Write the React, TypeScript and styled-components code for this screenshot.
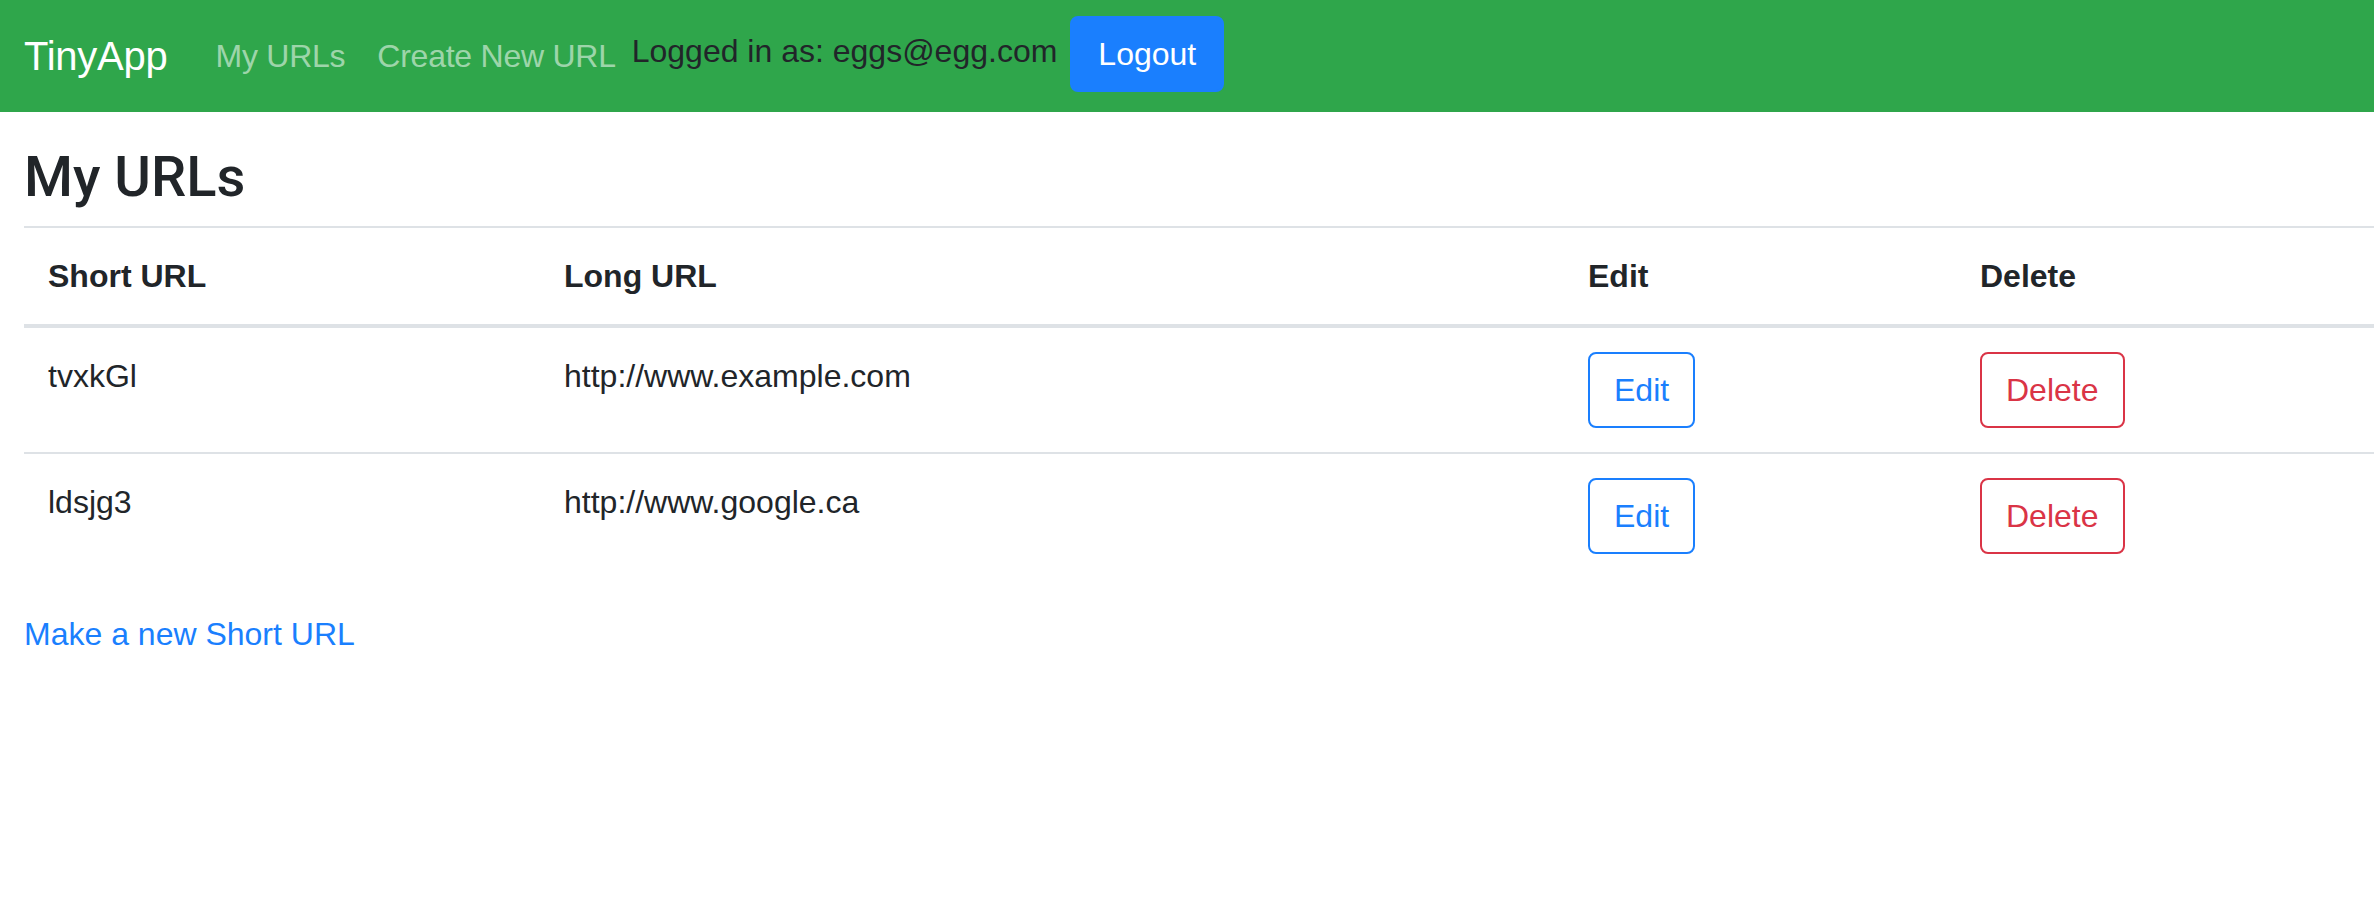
import styled, { createGlobalStyle } from "styled-components";

const GlobalStyle = createGlobalStyle`
  html, body {
    margin: 0;
    padding: 0;
    background: #fff;
  }
  body {
    font-family: "Liberation Sans", Arial, sans-serif;
    font-size: 32px;
    line-height: 48px;
    color: #212529;
    overflow: hidden;
  }
  * {
    box-sizing: border-box;
  }
`;

const NavBar = styled.nav`
  display: flex;
  align-items: flex-start;
  background-color: #2fa64b;
  padding: 16px 24px;
  height: 112px;
`;

const Brand = styled.a`
  color: #fff;
  font-size: 40px;
  line-height: 60px;
  padding: 10px 0;
  margin-right: 32px;
  text-decoration: none;
  white-space: nowrap;
  letter-spacing: -0.25px;
`;

const NavLink = styled.a`
  color: rgba(255, 255, 255, 0.55);
  padding: 16px;
  text-decoration: none;
  white-space: nowrap;
  letter-spacing: -0.25px;
`;

const UserBox = styled.div`
  display: flex;
  align-items: flex-start;
  gap: 13px;
  span {
    padding-top: 11px;
    white-space: nowrap;
  }
`;

const Button = styled.button<{ $tone: string; $outline?: boolean; $padX?: number }>`
  font-family: inherit;
  font-size: 32px;
  line-height: 48px;
  padding: 12px ${(p) => p.$padX ?? 24}px;
  border-radius: 8px;
  border: 2px solid ${(p) => p.$tone};
  background: ${(p) => (p.$outline ? "transparent" : p.$tone)};
  color: ${(p) => (p.$outline ? p.$tone : "#fff")};
  cursor: pointer;
  white-space: nowrap;
`;

const Main = styled.main`
  padding-left: 24px;
`;

const Title = styled.h1`
  font-family: Roboto, "Liberation Sans", Arial, sans-serif;
  font-size: 56px;
  line-height: 67px;
  font-weight: 500;
  margin: 32px 0 15px;
`;

const Table = styled.table`
  width: 100%;
  table-layout: fixed;
  border-collapse: collapse;
  margin-bottom: 32px;
  th,
  td {
    text-align: left;
    vertical-align: top;
    padding: 24px;
    border-top: 2px solid #dee2e6;
  }
  th {
    font-weight: bold;
  }
  thead th {
    border-bottom: 4px solid #dee2e6;
  }
`;

const NewLink = styled.a`
  color: #1a7ffe;
  text-decoration: none;
`;

const urls = [
  { short: "tvxkGl", long: "http://www.example.com" },
  { short: "ldsjg3", long: "http://www.google.ca" },
];

const BLUE = "#1a7ffe";
const RED = "#da3446";

export default function App() {
  return (
    <>
      <GlobalStyle />
      <NavBar>
        <Brand href="#">TinyApp</Brand>
        <NavLink href="#">My URLs</NavLink>
        <NavLink href="#">Create New URL</NavLink>
        <UserBox>
          <span>Logged in as: eggs@egg.com</span>
          <Button $tone={BLUE} $padX={26}>
            Logout
          </Button>
        </UserBox>
      </NavBar>
      <Main>
        <Title>My URLs</Title>
        <Table>
          <colgroup>
            <col style={{ width: "516px" }} />
            <col style={{ width: "1024px" }} />
            <col style={{ width: "392px" }} />
            <col />
          </colgroup>
          <thead>
            <tr>
              <th>Short URL</th>
              <th>Long URL</th>
              <th>Edit</th>
              <th>Delete</th>
            </tr>
          </thead>
          <tbody>
            {urls.map((u) => (
              <tr key={u.short}>
                <td>{u.short}</td>
                <td>{u.long}</td>
                <td>
                  <Button $tone={BLUE} $outline>
                    Edit
                  </Button>
                </td>
                <td>
                  <Button $tone={RED} $outline>
                    Delete
                  </Button>
                </td>
              </tr>
            ))}
          </tbody>
        </Table>
        <NewLink href="#">Make a new Short URL</NewLink>
      </Main>
    </>
  );
}
